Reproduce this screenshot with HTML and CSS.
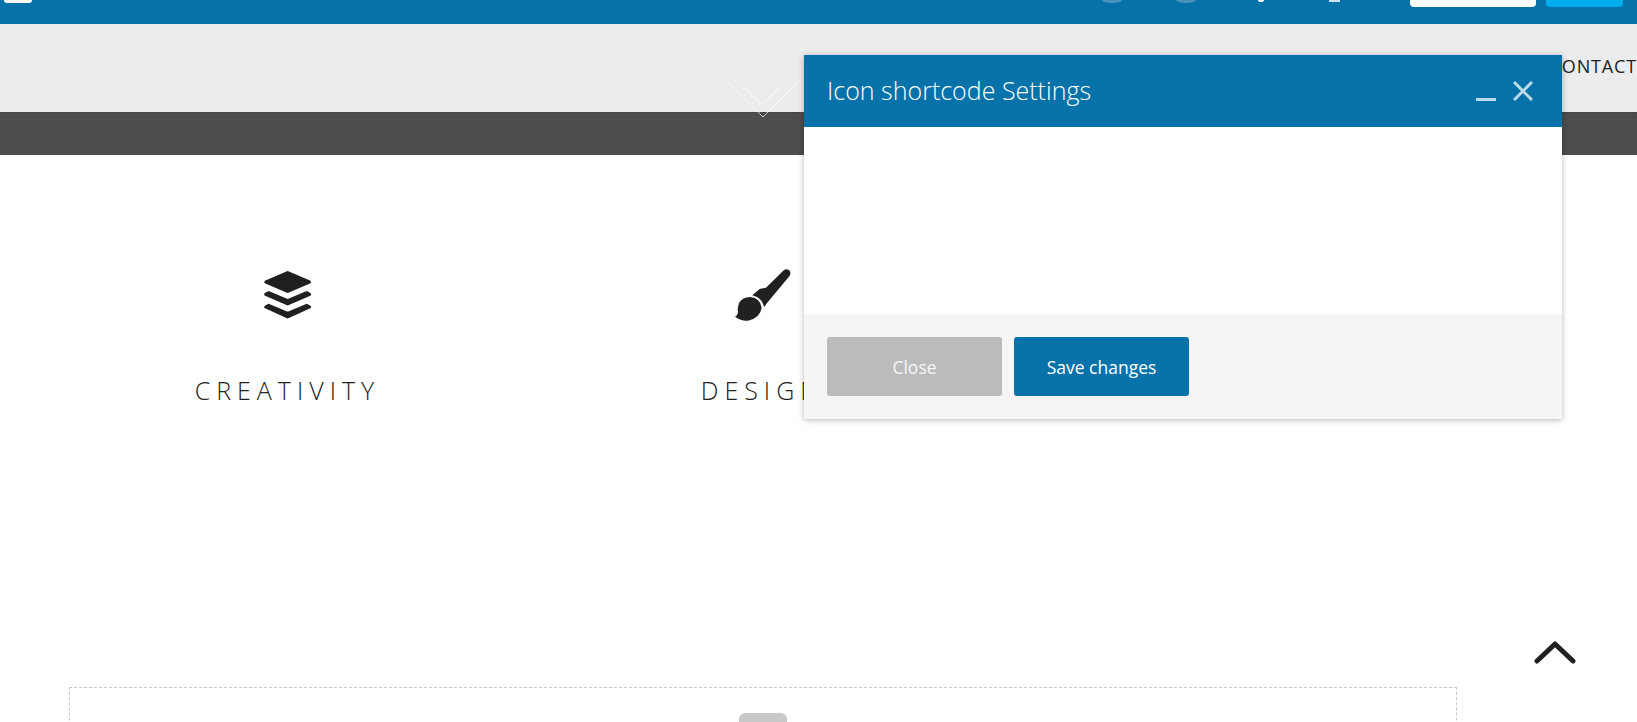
FILE: index.html
```html
<!DOCTYPE html>
<html lang="en">
<head>
<meta charset="utf-8">
<title>Icon shortcode Settings</title>
<link rel="stylesheet" href="styles.css">
</head>
<body>
<div class="page">
  <header class="topbar">
    <span class="logo-chip"></span>
    <div class="top-actions">
      <span class="circle"></span>
      <span class="circle circle-last"></span>
      <span class="tick"></span>
      <span class="square"></span>
      <span class="btn-white"></span>
      <span class="btn-blue"></span>
    </div>
  </header>
  <nav class="nav"><a class="nav-link">CONTACT</a></nav>
  <div class="darkband"></div>
  <section class="features">
    <div class="feature">
      <svg class="feature-icon" viewBox="270 50 170 165" aria-hidden="true">
        <g fill="#202020" stroke="#202020" stroke-linejoin="round">
          <path stroke-width="10" d="M289 95 354 67 419 95 354 123Z"/>
          <path stroke-width="9" d="M288 132 297 127 354 151 411 127 420 132 354 161Z"/>
          <path stroke-width="9" d="M288 170 297 165 354 189 411 165 420 170 354 200Z"/>
        </g>
      </svg>
      <h3 class="feature-title">CREATIVITY</h3>
    </div>
    <div class="feature">
      <svg class="feature-icon" viewBox="160 50 180 165" aria-hidden="true">
        <g fill="#202020">
          <path d="M313 59Q323 53 330 61 335 69 329 78L262 158 253 171Q250 150 232 140L218 135 240 116 259 112Z"/>
          <path d="M178 158Q188 140 212 140 242 143 246 172 242 202 205 211 185 213 166 199 178 192 174 178 175 168 178 158Z"/>
        </g>
      </svg>
      <h3 class="feature-title">DESIGN</h3>
    </div>
    <div class="feature"></div>
  </section>
  <section class="dropzone">
    <span class="drop-handle"></span>
  </section>
</div>

<svg class="chevrons" viewBox="0 0 72 38" aria-hidden="true">
  <path class="chev-outer" d="M1 1 36 36 71 1"/>
  <path class="chev-inner" d="M18 7 35 24 52 7"/>
</svg>

<svg class="to-top" viewBox="0 0 42 24" aria-hidden="true">
  <path d="M3 21 21 4 39 21"/>
</svg>

<div class="modal">
  <div class="modal-head">
    <h2 class="modal-title">Icon shortcode Settings</h2>
    <div class="modal-tools">
      <svg class="tool" viewBox="0 0 20 20" aria-hidden="true"><path d="M0 18.5H20"/></svg>
      <svg class="tool" viewBox="0 0 20 20" aria-hidden="true"><path d="M1 1 19 19M19 1 1 19"/></svg>
    </div>
  </div>
  <div class="modal-body"></div>
  <div class="modal-foot">
    <button class="btn btn-close">Close</button>
    <button class="btn btn-save">Save changes</button>
  </div>
</div>
</body>
</html>
```
FILE: styles.css
```css
* { box-sizing: border-box; }
html, body { margin: 0; height: 722px; overflow: hidden; background: #fff; }
body { font-family: "Open Sans", "Liberation Sans", sans-serif; position: relative; }
.page { height: 722px; overflow: hidden; }

.topbar {
  height: 24px;
  background: #0573aa;
  display: flex;
  justify-content: space-between;
  align-items: flex-start;
  overflow: hidden;
  padding: 0 14px 0 4px;
}
.logo-chip { width: 28px; height: 3px; background: #fff; border-radius: 0 0 4px 4px; flex: none; }
.top-actions { display: flex; align-items: flex-start; }
.circle { width: 20px; height: 3px; border-radius: 0 0 10px 10px / 0 0 3px 3px; background: #4b93bc; margin-right: 54px; flex: none; }
.circle-last { margin-right: 62px; }
.tick { width: 6px; height: 2px; background: #fff; border-radius: 0 0 3px 3px; margin-right: 65px; flex: none; }
.square { width: 11px; height: 2px; background: #cfe3ef; margin-right: 70px; flex: none; }
.btn-white, .btn-blue { height: 7px; border-radius: 0 0 4px 4px; flex: none; }
.btn-white { width: 126px; background: #fff; margin-right: 10px; }
.btn-blue { width: 77px; background: #00adef; }

.nav {
  height: 88px;
  background: #ececec;
  display: flex;
  justify-content: flex-end;
  padding-top: 30px;
}
.nav-link { font-size: 18px; line-height: 24px; letter-spacing: 0.85px; color: #222; white-space: nowrap; }

.darkband { height: 43px; background: #4d4d4d; box-shadow: inset 0 1px 1px rgba(0,0,0,.08); }

.features {
  height: 532px;
  padding: 112px 0 0 50px;
  display: grid;
  grid-template-columns: repeat(3, 475px);
  align-content: start;
}
.feature { display: flex; flex-direction: column; align-items: center; }
.feature-icon { width: 60px; height: 55px; display: block; }
.feature-title {
  margin: 51px 0 0;
  font-size: 25px;
  line-height: 34px;
  font-weight: 300;
  letter-spacing: 6px;
  color: #222;
  white-space: nowrap;
}

.dropzone {
  margin: 0 180px 0 69px;
  height: 120px;
  border: 1px dashed #c8c8c8;
  display: flex;
  justify-content: center;
  padding-top: 25px;
}
.drop-handle { width: 48px; height: 40px; background: #c8c8c8; border-radius: 6px; }

.chevrons { position: absolute; left: 727px; top: 81px; width: 72px; height: 38px; fill: none; }
.chev-outer { stroke: rgba(255,255,255,.72); stroke-width: 1; }
.chev-inner { stroke: rgba(255,255,255,.85); stroke-width: 1; }

.to-top { position: absolute; left: 1534px; top: 640px; width: 42px; height: 24px; fill: none; stroke: #202020; stroke-width: 5; stroke-linecap: round; stroke-linejoin: round; }

.modal {
  position: absolute;
  left: 804px;
  top: 55px;
  width: 758px;
  height: 364px;
  display: flex;
  flex-direction: column;
  background: #fff;
  box-shadow: 0 1px 6px rgba(0,0,0,.28);
}
.modal-head {
  height: 72px;
  background: #0573aa;
  display: flex;
  align-items: center;
  justify-content: space-between;
  padding: 0 29px 0 23px;
  flex: none;
}
.modal-title { margin: 0 0 2px; font-size: 25px; line-height: 32px; font-weight: 300; color: #fff; }
.modal-tools { display: flex; gap: 17px; align-items: center; }
.tool { width: 20px; height: 20px; fill: none; stroke: #bcdcec; stroke-width: 3; display: block; }
.modal-body { height: 187px; flex: none; }
.modal-foot {
  flex: 1;
  background: #f5f5f5;
  padding: 23px;
  display: flex;
  gap: 12px;
  align-items: flex-start;
}
.btn {
  width: 175px;
  height: 59px;
  border: 0;
  border-radius: 3px;
  font-family: inherit;
  font-size: 17.5px;
  color: #fff;
  padding: 0;
}
.btn-close { background: #bbbbbb; color: #f7f7f7; }
.btn-save { background: #0573aa; }
```
